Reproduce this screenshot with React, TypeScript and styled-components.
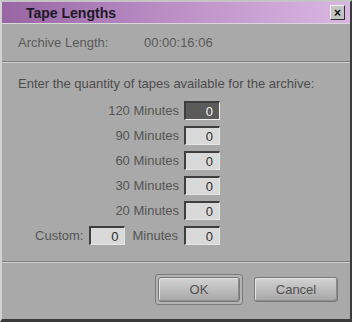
import styled, { createGlobalStyle } from "styled-components";

const GlobalStyle = createGlobalStyle`
    html, body {
        margin: 0;
        padding: 0;
        background: #a9a9a9;
    }
    * { box-sizing: border-box; }
`

const Window = styled.div`
    width: 352px;
    height: 322px;
    background-color: #a9a9a9;
    border-left: 2px solid #d2d2d2;
    border-top: 2px solid #c4c4c4;
    border-right: 2px solid #3c3c3c;
    border-bottom: 3px solid #3a3a3a;
    display: flex;
    flex-direction: column;
    font-family: "Liberation Sans", Arial, sans-serif;
    font-size: 13px;
    color: #4a4a4a;
`
const TitleBar = styled.div`
    height: 22px;
    background: linear-gradient(to right, #9866a3 0%, #b98cc4 45%, #dab6e2 100%);
    display: flex;
    align-items: center;
    justify-content: space-between;
    padding: 0 5px 0 24px;
    border-bottom: 1px solid #d8d8d8;
`
const Title = styled.span`
    font-size: 14px;
    font-weight: 700;
    color: #1c1a28;
`
const CloseBtn = styled.div`
    width: 15px;
    height: 15px;
    background-color: #c4c4c4;
    border-top: 1px solid #f0f0f0;
    border-left: 1px solid #f0f0f0;
    border-right: 1px solid #303030;
    border-bottom: 1px solid #303030;
    display: flex;
    align-items: center;
    justify-content: center;
    font-size: 12px;
    font-weight: 900;
    color: #111;
    line-height: 1;
`
const ArchiveRow = styled.div`
    height: 37px;
    display: flex;
    align-items: center;
    padding-left: 16px;
    color: #5a5a5a;
`
const ArchiveLabel = styled.span`
    width: 126px;
`
const Separator = styled.div`
    height: 2px;
    border-top: 1px solid #808080;
    border-bottom: 1px solid #cdcdcd;
`
const Section = styled.div`
    height: 198px;
    padding: 13px 0 0 16px;
`
const Prompt = styled.div`
    height: 22px;
    color: #4c4c4c;
`
const Rows = styled.div`
    width: 202px;
    display: flex;
    flex-direction: column;
`
const Row = styled.div<{ gap?: number }>`
    height: 25px;
    display: flex;
    align-items: center;
    justify-content: flex-end;
    gap: ${props => props.gap ?? 5}px;
`
const Label = styled.span`
    color: #555;
`
const NumInput = styled.div<{ focused?: boolean }>`
    width: 36px;
    height: 19px;
    background-color: ${props => props.focused ? "#5a5a5a" : "#d9d9d9"};
    color: ${props => props.focused ? "#f2f2f2" : "#2e2e2e"};
    border-top: 2px solid #3e3e3e;
    border-left: 2px solid #3e3e3e;
    border-right: 1px solid ${props => props.focused ? "#f4f4f4" : "#e4e4e4"};
    border-bottom: 1px solid ${props => props.focused ? "#f4f4f4" : "#e4e4e4"};
    display: flex;
    align-items: center;
    justify-content: flex-end;
    padding-right: 6px;
    font-size: 13px;
`
const ButtonBar = styled.div`
    flex: 1;
    display: flex;
    justify-content: flex-end;
    align-items: flex-start;
    padding: 11px 12px 0 0;
    gap: 11px;
`
const FocusRing = styled.div`
    padding: 2px;
    border: 1px solid #7a7a7a;
    border-radius: 3px;
    background-color: #b4b4b4;
`
const Button = styled.div<{ w: number }>`
    width: ${props => props.w}px;
    height: 25px;
    border: 1px solid #767676;
    border-radius: 3px;
    background: linear-gradient(to bottom, #d2d2d2 0%, #bdbdbd 50%, #a6a6a6 100%);
    box-shadow: inset 1px 1px 0 #e6e6e6, inset -1px -1px 0 #8e8e8e;
    display: flex;
    align-items: center;
    justify-content: center;
    color: #505050;
    font-size: 13px;
`
const CancelWrap = styled.div`
    padding-top: 3px;
`

const tapes = ["120", "90", "60", "30", "20"];

const App = () => {
    return (
        <>
            <GlobalStyle />
            <Window>
                <TitleBar>
                    <Title>Tape Lengths</Title>
                    <CloseBtn>×</CloseBtn>
                </TitleBar>
                <ArchiveRow>
                    <ArchiveLabel>Archive Length:</ArchiveLabel>
                    <span>00:00:16:06</span>
                </ArchiveRow>
                <Separator />
                <Section>
                    <Prompt>Enter the quantity of tapes available for the archive:</Prompt>
                    <Rows>
                        {tapes.map((t, i) => (
                            <Row key={t}>
                                <Label>{t} Minutes</Label>
                                <NumInput focused={i === 0}>0</NumInput>
                            </Row>
                        ))}
                        <Row gap={6}>
                            <Label>Custom:</Label>
                            <NumInput>0</NumInput>
                            <Label style={{ marginLeft: 1 }}>Minutes</Label>
                            <NumInput>0</NumInput>
                        </Row>
                    </Rows>
                </Section>
                <Separator />
                <ButtonBar>
                    <FocusRing>
                        <Button w={82}>OK</Button>
                    </FocusRing>
                    <CancelWrap>
                        <Button w={84}>Cancel</Button>
                    </CancelWrap>
                </ButtonBar>
            </Window>
        </>
    );
};
export default App;
